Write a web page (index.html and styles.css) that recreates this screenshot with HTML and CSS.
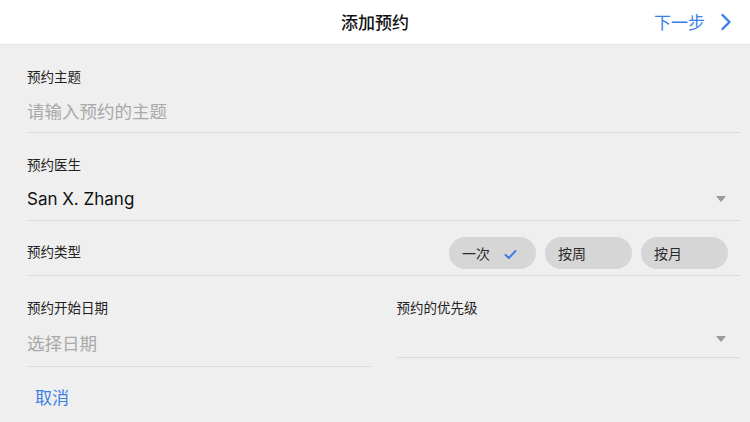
FILE: index.html
```html
<!DOCTYPE html>
<html lang="zh">
<head>
<meta charset="utf-8">
<title>添加预约</title>
<link rel="stylesheet" href="styles.css">
</head>
<body>
<header class="nav">
  <div class="nav-side"></div>
  <h1 class="nav-title">添加预约</h1>
  <div class="nav-side nav-right">
    <span class="nav-next">下一步</span>
    <svg class="chev" width="12" height="18" viewBox="0 0 12 18"><path d="M2.5 2 L9.5 9 L2.5 16" fill="none" stroke="#3b7fe6" stroke-width="2.4" stroke-linecap="round" stroke-linejoin="round"/></svg>
  </div>
</header>
<main class="form">
  <section class="field">
    <div class="label">预约主题</div>
    <div class="value placeholder">请输入预约的主题</div>
  </section>
  <section class="field field-select">
    <div class="label">预约医生</div>
    <div class="value select-row">
      <span>San X. Zhang</span>
      <span class="caret"></span>
    </div>
  </section>
  <section class="type-row">
    <div class="label">预约类型</div>
    <div class="pills">
      <div class="pill">一次
        <svg class="check" width="13" height="11" viewBox="0 0 13 11"><path d="M1.5 6 L4.8 9 L11.5 2" fill="none" stroke="#3b7fe6" stroke-width="2" stroke-linecap="round" stroke-linejoin="round"/></svg>
      </div>
      <div class="pill">按周</div>
      <div class="pill">按月</div>
    </div>
  </section>
  <section class="cols">
    <div class="col col-left">
      <div class="label">预约开始日期</div>
      <div class="value placeholder date">选择日期</div>
    </div>
    <div class="col col-right">
      <div class="label">预约的优先级</div>
      <div class="prio"><span class="caret"></span></div>
    </div>
  </section>
  <div class="cancel">取消</div>
</main>
</body>
</html>
```
FILE: styles.css
```css
* { box-sizing: border-box; }
html, body {
  margin: 0;
  padding: 0;
  width: 750px;
  height: 422px;
  overflow: hidden;
  background: #efefef;
  font-family: "Noto Sans CJK SC", "Noto Sans", sans-serif;
  color: #1a1a1a;
}
.nav {
  height: 45px;
  background: #ffffff;
  border-bottom: 1px solid #e4e4e4;
  display: flex;
  align-items: center;
  justify-content: space-between;
}
.nav-side {
  width: 120px;
  display: flex;
  align-items: center;
}
.nav-right {
  justify-content: flex-end;
  padding-right: 18px;
  gap: 15px;
}
.nav-title {
  margin: 0;
  font-size: 17px;
  font-weight: 500;
  color: #111;
  line-height: 24px;
}
.nav-next {
  font-size: 17px;
  color: #3b7fe6;
  line-height: 24px;
}
.chev { display: block; }
.form {
  padding-left: 27px;
  padding-right: 10px;
}
.field {
  padding-top: 22px;
  padding-bottom: 9px;
  border-bottom: 1px solid #dadada;
}
.label {
  font-size: 13.5px;
  line-height: 18px;
  color: #222;
}
.value {
  margin-top: 14px;
  font-size: 17.5px;
  line-height: 24px;
}
.placeholder { color: #a9a9a9; }
.select-row {
  display: flex;
  align-items: center;
  justify-content: space-between;
  font-family: Inter, "Noto Sans", sans-serif;
  font-size: 17px;
  color: #111;
}
.caret {
  width: 0;
  height: 0;
  border-left: 5.5px solid transparent;
  border-right: 5.5px solid transparent;
  border-top: 6px solid #9a9a9a;
  margin-right: 14px;
}
.type-row {
  display: flex;
  align-items: center;
  justify-content: space-between;
  padding-top: 16px;
  padding-bottom: 6px;
  border-bottom: 1px solid #dadada;
}
.type-row .label { margin-top: -4px; }
.pills {
  display: flex;
  gap: 9px;
  padding-right: 12px;
}
.pill {
  width: 87px;
  height: 32px;
  border-radius: 16px;
  background: #d6d6d6;
  display: flex;
  align-items: center;
  gap: 14px;
  padding-left: 13px;
  font-size: 14px;
  color: #2a2a2a;
}
.check { display: block; margin-top: 2px; }
.cols {
  display: flex;
  gap: 26px;
  align-items: flex-start;
}
.col {
  flex: 1;
  padding-top: 22px;
  border-bottom: 1px solid #dadada;
}
.col-left { padding-bottom: 11px; }
.date { margin-top: 15px; }
.prio {
  height: 41px;
  display: flex;
  align-items: center;
  justify-content: flex-end;
  padding-top: 4px;
}
.prio .caret { margin-right: 14px; }
.cancel {
  margin-top: 18px;
  margin-left: 8px;
  font-size: 17px;
  line-height: 24px;
  color: #3b7fe6;
}
```
